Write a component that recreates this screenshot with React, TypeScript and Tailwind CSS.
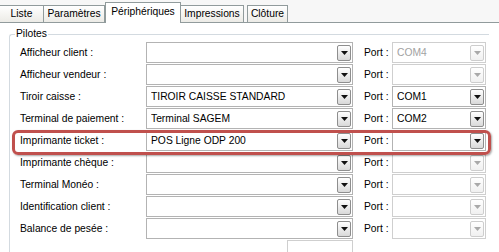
const tabs = [
  { label: "Liste", w: "w-[44px]" },
  { label: "Paramètres", w: "w-[61px]" },
  { label: "Périphériques", w: "w-[76px]", active: true },
  { label: "Impressions", w: "w-[63px]" },
  { label: "Clôture", w: "w-[41px]" },
];

const rows = [
  { label: "Afficheur client :", value: "", port: "COM4", portOn: false },
  { label: "Afficheur vendeur :", value: "", port: "", portOn: false },
  { label: "Tiroir caisse :", value: "TIROIR CAISSE STANDARD", port: "COM1", portOn: true },
  { label: "Terminal de paiement :", value: "Terminal SAGEM", port: "COM2", portOn: true },
  { label: "Imprimante ticket :", value: "POS Ligne ODP 200", port: "", portOn: true },
  { label: "Imprimante chèque :", value: "", port: "", portOn: false },
  { label: "Terminal Monéo :", value: "", port: "", portOn: false },
  { label: "Identification client :", value: "", port: "", portOn: false },
  { label: "Balance de pesée :", value: "", port: "", portOn: false },
];

function Arrow({ on }: { on: boolean }) {
  return (
    <svg width="7" height="4" viewBox="0 0 7 4">
      <path d="M0 0h7L3.5 4z" fill={on ? "#111" : "#a9a9a9"} />
    </svg>
  );
}

function Combo({ value, on, width }: { value: string; on: boolean; width: string }) {
  return (
    <div
      className={`flex h-[21px] ${width} items-center border bg-white pl-[4px] pr-[1px] ${
        on ? "border-[#b3b3b3] text-black" : "border-[#cfcfcf] text-[#a2a2a2]"
      }`}
    >
      <span className="flex-1 truncate">{value}</span>
      <span
        className={`flex h-[16px] w-[14px] items-center justify-center rounded-[2px] border ${
          on
            ? "border-[#8e8e8e] bg-gradient-to-b from-white to-[#d9d9d9]"
            : "border-[#cdcdcd] bg-gradient-to-b from-white to-[#f0f0f0]"
        }`}
      >
        <Arrow on={on} />
      </span>
    </div>
  );
}

export default function App() {
  return (
    <div className="relative h-[252px] w-[499px] overflow-hidden bg-white text-[10.3px] text-black [font-family:'Liberation_Sans',Arial,sans-serif]">
      <div className="flex h-[23px] items-end border-b border-[#919b9c] bg-[#f7f7f7]">
        {tabs.map((t) =>
          t.active ? (
            <div
              key={t.label}
              className={`${t.w} -mb-px flex h-[21px] items-center justify-center border border-b-0 border-[#919b9c] bg-white pb-[2px]`}
            >
              {t.label}
            </div>
          ) : (
            <div
              key={t.label}
              className={`${t.w} flex h-[17px] items-center justify-center border border-b-0 border-l-0 border-[#919b9c] bg-gradient-to-b from-white to-[#ecebe6] first:border-l-0 last:ml-[3px] last:border-l`}
            >
              {t.label}
            </div>
          )
        )}
      </div>

      <div className="mt-[11px] ml-[9px] w-[480px] rounded-tl-[3px] border-t border-l border-[#d3dae0]">
        <div className="-mt-[8px] ml-[5px] w-fit bg-white px-[1px] leading-[14px]">Pilotes</div>
        <div className="mt-[1px] flex flex-col gap-[1px] pl-[10px]">
          {rows.map((r) => (
            <div key={r.label} className="flex h-[21px] items-center">
              <span className="w-[126px]">{r.label}</span>
              <Combo value={r.value} on width="w-[207px]" />
              <span className="ml-[11px] w-[28px]">Port :</span>
              <Combo value={r.port} on={r.portOn} width="w-[94px]" />
            </div>
          ))}
          <div className="flex h-[21px] items-start pl-[267px]">
            <div className="h-[21px] w-[66px] border border-[#cfcfcf] bg-white" />
          </div>
        </div>
      </div>

      <div className="pointer-events-none absolute left-[12px] top-[130px] h-[25px] w-[479px] rounded-[6px] border-[3px] border-[#c0504d] shadow-[1px_1px_2px_rgba(0,0,0,0.35)]" />
    </div>
  );
}
